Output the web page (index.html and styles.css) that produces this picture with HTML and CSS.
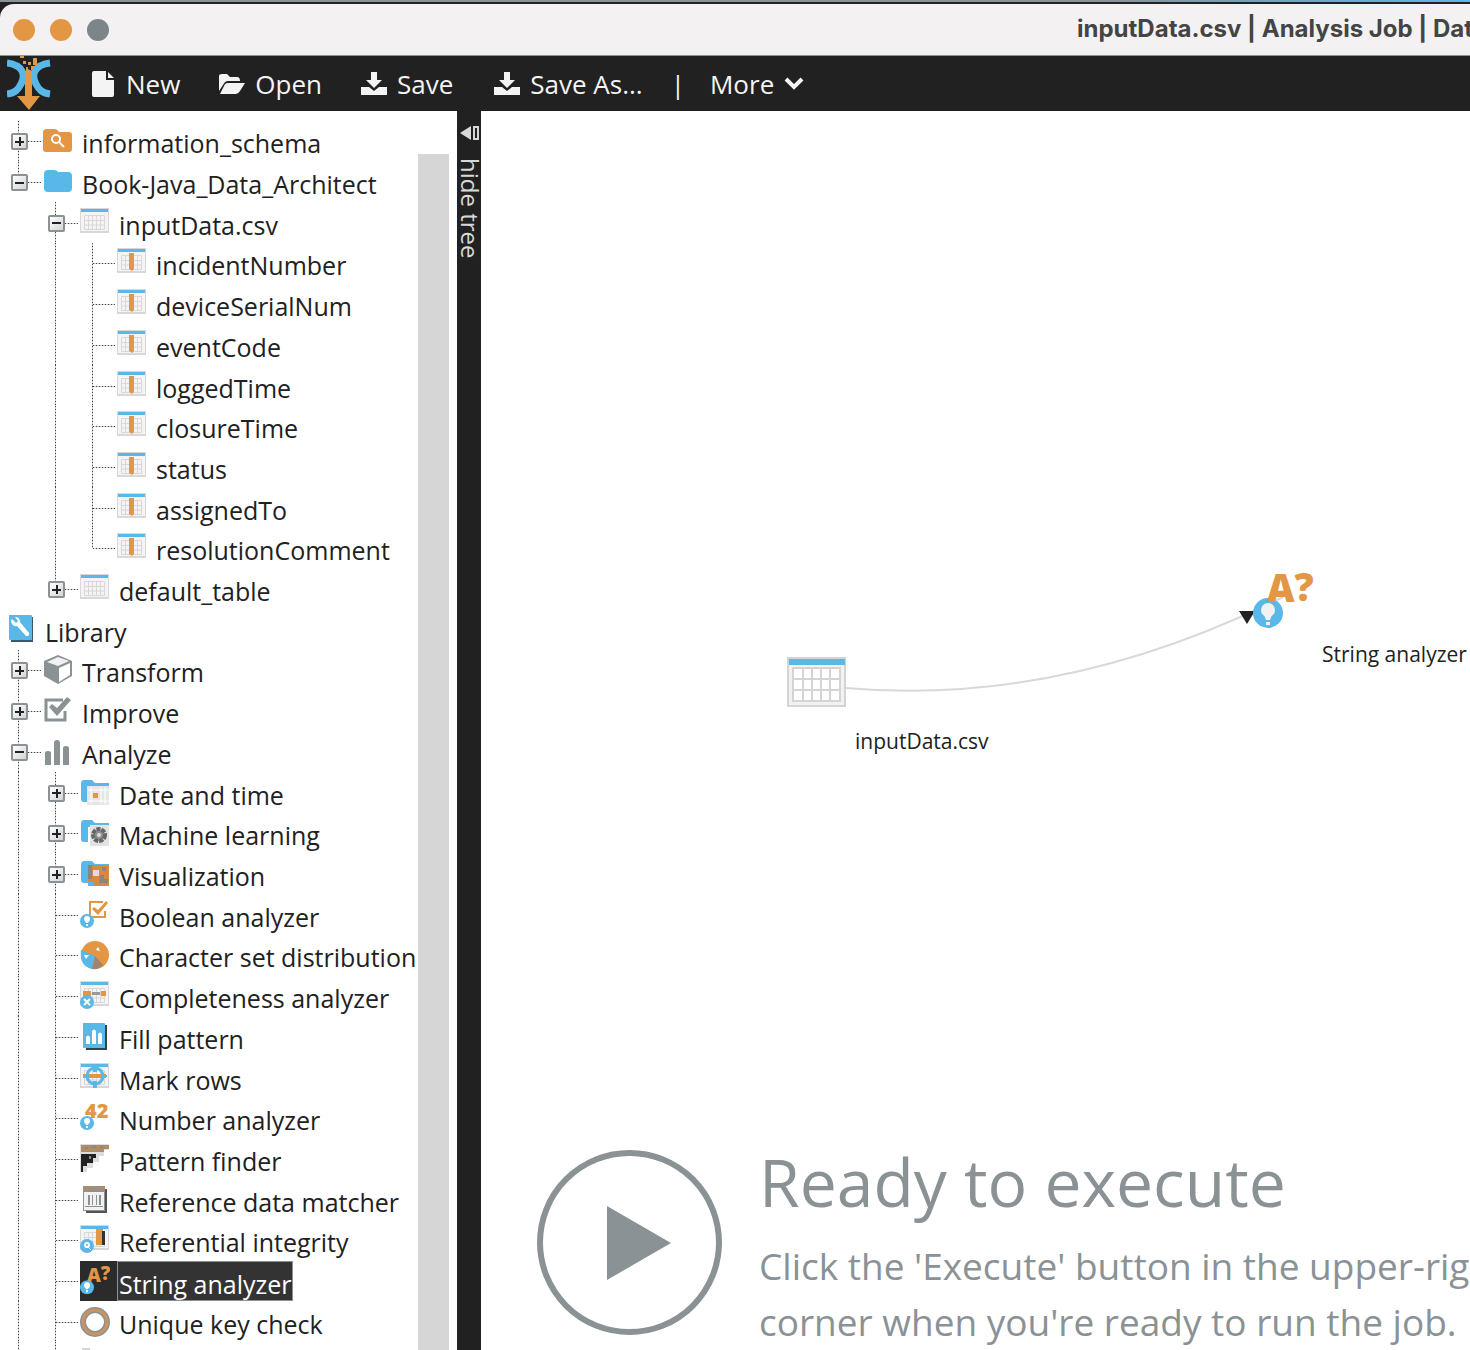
FILE: index.html
```html
<!DOCTYPE html>
<html lang="en">
<head>
<meta charset="utf-8">
<title>inputData.csv | Analysis Job</title>
<link rel="stylesheet" href="styles.css">
</head>
<body>
<svg class="sprite" aria-hidden="true">
  <symbol id="folder" viewBox="0 0 30 30"><path fill="#5ab8e8" d="M1 7Q1 3 5 3h6q3 0 4 2h10q4 0 4 4v12q0 4-4 4H5q-4 0-4-4z"/></symbol>
  <symbol id="folder-search" viewBox="0 0 30 30"><path fill="#e39643" d="M0 6Q0 3 4 3h8q2 0 4 3h10q3 0 3 3v14q0 3-3 3H3q-3 0-3-3z"/><circle cx="13" cy="13" r="4" fill="none" stroke="#fff" stroke-width="2"/><path d="m16 16 5 5" stroke="#fff" stroke-width="2"/></symbol>
  <symbol id="table" viewBox="0 0 30 30"><path fill="#d8d8d8" d="M0 0h29v25H0z"/><path fill="#f5f3f4" d="M1 4h27v19H1z"/><path fill="#5ab8e8" d="M1 1h27v3H1z"/><path fill="none" stroke="#d8d8d8" stroke-width="1" d="M4.500 7.500h20v14h-20zM4 12.500h21M4 17h21M8.500 7v15M12.500 7v15M16.500 7v15M20.500 7v15"/></symbol>
  <symbol id="column" viewBox="0 0 30 30"><use href="#table"/><path fill="#e39643" d="M12 5h5v16l-2 2-3-2z"/></symbol>
  <symbol id="library" viewBox="0 0 30 30"><path fill="#3a5a6c" d="M5 2h22v25H5z"/><path fill="#5ab8e8" d="M3 0h22q1 0 1 1v24H4q-1 0-1-1z"/><path fill="#fff" d="M5 6l1-2 4 4 2-2-3-4q5 0 5 5l9 11q1 2-1 3l-2 0L11 11Q6 12 5 6z"/></symbol>
  <symbol id="cube" viewBox="0 0 30 30"><path fill="#8a9296" d="M15 0l14 6v15l-14 8-14-8V6z"/><path fill="#f3f1f2" d="M15 2l11 4-11 5L4 7z"/><path fill="#fff" d="M16 13l11-5v12l-11 7z"/></symbol>
  <symbol id="improve" viewBox="0 0 30 30"><path fill="none" stroke="#8a9296" stroke-width="3" d="M20 4H3v20h19v-9"/><path fill="#8a9296" d="M6 11l3-3 5 4L24 1l4 3-14 16z"/></symbol>
  <symbol id="bars" viewBox="0 0 30 30"><path fill="#8a9296" d="M2 16q0-2 3-2t3 2v12H2zM11 6q0-3 3-3t3 3v22h-6zM20 11q0-2 3-2t3 2v17h-6z"/></symbol>
  <symbol id="folder-edge" viewBox="0 0 30 30"><path fill="#5ab8e8" d="M1 6Q1 2 4 2h8l3 3h14v4H8v15H4q-3 0-3-3z"/></symbol>
  <symbol id="date" viewBox="0 0 30 30"><use href="#folder-edge"/><path fill="#e6e6e6" d="M7 8h22v19H7z"/><path stroke="#fff" d="M8 12h21M8 23h21M11 9v17M21 9v17M25 9v17"/><path fill="#e39643" d="M13 15h5v5h-5z"/></symbol>
  <symbol id="machine" viewBox="0 0 30 30"><use href="#folder-edge"/><path fill="#e2e2e2" d="M10 7h19v21H10z"/><circle cx="19" cy="17" r="6" fill="#8a9296" stroke="#666" stroke-width="4" stroke-dasharray="4 1"/><circle cx="19" cy="17" r="2" fill="#ddd"/></symbol>
  <symbol id="visual" viewBox="0 0 30 30"><use href="#folder-edge"/><path fill="#d58a3e" d="M8 6h21v21H8z"/><path fill="#8a8580" d="M8 6h4v14H8zM20 16h4v4h4v4h-9zM22 8h4v4h-4z"/><path fill="#ddd" d="M13 11h6v6h-6z"/><path fill="#5ab8e8" d="M8 23h5v4H8z"/></symbol>
  <symbol id="bulb" viewBox="0 0 14 14"><circle cx="7" cy="7" r="7" fill="#5ab8e8"/><circle cx="7" cy="5" r="3" fill="#fff"/><path fill="#fff" d="M5 6h4L8 9H6zM6 10h2v2H6z"/></symbol>
  <symbol id="boolean" viewBox="0 0 30 30"><path fill="none" stroke="#e39643" stroke-width="2" d="M23 2H10v15h15v-6"/><path fill="#e39643" d="M12 9l2-2 4 3 8-9 2 2-10 12z"/><use href="#bulb" x="0" y="14" width="14" height="14"/></symbol>
  <symbol id="pie" viewBox="0 0 30 30"><circle cx="15" cy="15" r="14" fill="#e39643"/><path fill="#5ab8e8" d="M15 16L1 10q-2 16 11 19z"/><path fill="#a08470" d="M15 16l-3 13q7 1 11-4z"/><path fill="#fff" d="M4 15h5l-3 4zM16 10l2-3 2 4z"/></symbol>
  <symbol id="complete" viewBox="0 0 30 30"><use href="#table"/><path fill="#e39643" d="M3 10h8v5H3zM21 10h5v5h-5z"/><path fill="#999" d="M12 11h8v3h-8z"/><circle cx="7" cy="21" r="7" fill="#5ab8e8"/><path stroke="#fff" stroke-width="2" d="m4 18 6 6m0-6-6 6"/></symbol>
  <symbol id="fill" viewBox="0 0 30 30"><path fill="#33424c" d="M6 3h21v25H6z"/><path fill="#5ab8e8" d="M3 1h21q1 0 1 1v24H4q-1 0-1-1z"/><path fill="#fff" d="M6 15q2-3 4 0v7H6zM12 9q2-3 4 0v13h-4zM18 12q2-3 4 0v10h-4z"/></symbol>
  <symbol id="mark" viewBox="0 0 30 30"><use href="#table"/><path fill="#e39643" d="M3 11h23v4H3z"/><circle cx="15" cy="13" r="8" fill="none" stroke="#5ab8e8" stroke-width="3"/><path stroke="#5ab8e8" stroke-width="4" d="M15 2v7M15 18v7"/><path stroke="#5ab8e8" stroke-width="2" d="M3 13h6M21 13h6"/><path fill="#e39643" d="M10 11h10v4H10z"/></symbol>
  <symbol id="number" viewBox="0 0 30 30"><text class="glyph" x="5" y="15" font-size="20">42</text><use href="#bulb" x="0" y="13" width="14" height="14"/></symbol>
  <symbol id="pattern" viewBox="0 0 30 30"><path fill="#ddd" d="M0 0h29v6h-5v6h-5v6h-6v6H7v4H0z"/><path fill="#b08c64" d="M1 1h28v4h-5v3H1z"/><path fill="#212121" d="M1 10h15v4h-3v5H7v3H3v6H1z"/><path fill="#888" d="M5 3h3v2H5zM12 2h4v2h-4zM20 2h3v2h-3zM9 12h2v3H9z"/></symbol>
  <symbol id="reference" viewBox="0 0 30 30"><path fill="#555" d="M6 4h21v24H6z"/><path fill="#8a9296" d="M3 1h22v25H3z"/><path fill="#f3f1f2" d="M4 7h20v18H4z"/><path fill="#a98d72" d="M3 1h22v5h-4q-6-4-13 0H3z"/><path fill="#8a9296" d="M8 10h2v10H8zM12 10h1v10h-1zM16 10h1v10h-1zM19 10h2v10h-2zM5 21h18v1H5z"/></symbol>
  <symbol id="integrity" viewBox="0 0 30 30"><use href="#table"/><path fill="#e39643" d="M16 4h7v16h-7z"/><path fill="#333" d="M22 6h3v14h-3z"/><circle cx="7" cy="21" r="7" fill="#5ab8e8"/><circle cx="7" cy="20" r="2" fill="none" stroke="#fff" stroke-width="2"/><path stroke="#fff" d="m8 22 3 3"/></symbol>
  <symbol id="string" viewBox="0 0 30 30"><text class="glyph" x="7" y="16" font-size="19">A<tspan dy="-2">?</tspan></text><use href="#bulb" x="0" y="14" width="14" height="14"/></symbol>
  <symbol id="ring" viewBox="0 0 30 30"><circle cx="15" cy="15" r="12" fill="none" stroke="#8a9296" stroke-width="6"/><circle cx="15" cy="15" r="12" fill="none" stroke="#c99460" stroke-width="3"/></symbol>
  <symbol id="save" viewBox="0 0 26 24"><path fill="#f4f4f4" d="M10 0h6v8h5l-8 8-8-8h5zM0 15h8l5 4 5-4h8v8H0z"/></symbol>
</svg>

<div class="desktop-edge">
  <header class="titlebar">
    <div class="lights"><span class="light"></span><span class="light"></span><span class="light light-off"></span></div>
    <h1 class="window-title">inputData.csv | Analysis Job | DataCleaner</h1>
  </header>
</div>

<nav class="toolbar">
  <svg class="logo" viewBox="0 0 44 55" aria-hidden="true"><path fill="none" stroke="#5ab8e8" stroke-width="7" d="M0 7c16 2 19 12 14 21C11 34 8 37 0 38M43 7C27 9 24 19 29 28c3 6 6 9 14 10"/><path fill="#e39643" d="M18 15l3-2 4 2v25h8l-11 14-12-14h8zM13 0h4v2h-4zM16 5h3v3h-3zM26 2h4v7h-4zM21 6h3v3h-3zM24 10h3v4h-3zM19 11h2v3h-2z"/></svg>
  <button class="tool tool-new"><svg width="24" height="26" viewBox="0 0 24 26"><path fill="#f4f4f4" d="M1 2q0-2 2-2h12v9h8v15q0 2-2 2H3q-2 0-2-2zM17 1l6 6h-6z"/></svg>New</button>
  <button class="tool tool-open"><svg width="26" height="20" viewBox="0 0 26 20"><path fill="#f4f4f4" d="M0 2q0-2 3-2h5l3 3h7q3 0 3 4H9q-3 0-5 4l-4 6zM9 9h17l-5 8q-2 3-4 3H1l4-8q1-3 4-3z"/></svg>Open</button>
  <button class="tool tool-save"><svg width="26" height="24"><use href="#save"/></svg>Save</button>
  <button class="tool tool-save-as"><svg width="26" height="24"><use href="#save"/></svg>Save As...</button>
  <span class="divider">|</span>
  <button class="tool">More<svg width="20" height="14" viewBox="0 0 20 14"><path fill="none" stroke="#f4f4f4" stroke-width="4" d="m2 2 8 8 8-8"/></svg></button>
</nav>

<main class="workspace">
  <aside class="sidebar">
    <ul class="tree">
      <li class="row"><span class="guide through branch"><button class="toggle plus" aria-label="Expand"></button></span><svg class="icon"><use href="#folder-search"/></svg><span class="label">information_schema</span></li>
      <li class="row"><span class="guide end branch"><button class="toggle" aria-label="Collapse"></button></span><svg class="icon"><use href="#folder"/></svg><span class="label">Book-Java_Data_Architect</span></li>
      <li class="row"><span class="guide"></span><span class="guide through branch"><button class="toggle" aria-label="Collapse"></button></span><svg class="icon"><use href="#table"/></svg><span class="label">inputData.csv</span></li>
      <li class="row"><span class="guide"></span><span class="guide through"></span><span class="guide through branch"></span><svg class="icon"><use href="#column"/></svg><span class="label">incidentNumber</span></li>
      <li class="row"><span class="guide"></span><span class="guide through"></span><span class="guide through branch"></span><svg class="icon"><use href="#column"/></svg><span class="label">deviceSerialNum</span></li>
      <li class="row"><span class="guide"></span><span class="guide through"></span><span class="guide through branch"></span><svg class="icon"><use href="#column"/></svg><span class="label">eventCode</span></li>
      <li class="row"><span class="guide"></span><span class="guide through"></span><span class="guide through branch"></span><svg class="icon"><use href="#column"/></svg><span class="label">loggedTime</span></li>
      <li class="row"><span class="guide"></span><span class="guide through"></span><span class="guide through branch"></span><svg class="icon"><use href="#column"/></svg><span class="label">closureTime</span></li>
      <li class="row"><span class="guide"></span><span class="guide through"></span><span class="guide through branch"></span><svg class="icon"><use href="#column"/></svg><span class="label">status</span></li>
      <li class="row"><span class="guide"></span><span class="guide through"></span><span class="guide through branch"></span><svg class="icon"><use href="#column"/></svg><span class="label">assignedTo</span></li>
      <li class="row"><span class="guide"></span><span class="guide through"></span><span class="guide end branch"></span><svg class="icon"><use href="#column"/></svg><span class="label">resolutionComment</span></li>
      <li class="row"><span class="guide"></span><span class="guide end branch"><button class="toggle plus" aria-label="Expand"></button></span><svg class="icon"><use href="#table"/></svg><span class="label">default_table</span></li>
      <li class="row"><svg class="icon"><use href="#library"/></svg><span class="label">Library</span></li>
      <li class="row"><span class="guide through branch"><button class="toggle plus" aria-label="Expand"></button></span><svg class="icon"><use href="#cube"/></svg><span class="label">Transform</span></li>
      <li class="row"><span class="guide through branch"><button class="toggle plus" aria-label="Expand"></button></span><svg class="icon"><use href="#improve"/></svg><span class="label">Improve</span></li>
      <li class="row"><span class="guide through branch"><button class="toggle" aria-label="Collapse"></button></span><svg class="icon"><use href="#bars"/></svg><span class="label">Analyze</span></li>
      <li class="row"><span class="guide through"></span><span class="guide through branch"><button class="toggle plus" aria-label="Expand"></button></span><svg class="icon"><use href="#date"/></svg><span class="label">Date and time</span></li>
      <li class="row"><span class="guide through"></span><span class="guide through branch"><button class="toggle plus" aria-label="Expand"></button></span><svg class="icon"><use href="#machine"/></svg><span class="label">Machine learning</span></li>
      <li class="row"><span class="guide through"></span><span class="guide through branch"><button class="toggle plus" aria-label="Expand"></button></span><svg class="icon"><use href="#visual"/></svg><span class="label">Visualization</span></li>
      <li class="row"><span class="guide through"></span><span class="guide through branch"></span><svg class="icon"><use href="#boolean"/></svg><span class="label">Boolean analyzer</span></li>
      <li class="row"><span class="guide through"></span><span class="guide through branch"></span><svg class="icon"><use href="#pie"/></svg><span class="label">Character set distribution</span></li>
      <li class="row"><span class="guide through"></span><span class="guide through branch"></span><svg class="icon"><use href="#complete"/></svg><span class="label">Completeness analyzer</span></li>
      <li class="row"><span class="guide through"></span><span class="guide through branch"></span><svg class="icon"><use href="#fill"/></svg><span class="label">Fill pattern</span></li>
      <li class="row"><span class="guide through"></span><span class="guide through branch"></span><svg class="icon"><use href="#mark"/></svg><span class="label">Mark rows</span></li>
      <li class="row"><span class="guide through"></span><span class="guide through branch"></span><svg class="icon"><use href="#number"/></svg><span class="label">Number analyzer</span></li>
      <li class="row"><span class="guide through"></span><span class="guide through branch"></span><svg class="icon"><use href="#pattern"/></svg><span class="label">Pattern finder</span></li>
      <li class="row"><span class="guide through"></span><span class="guide through branch"></span><svg class="icon"><use href="#reference"/></svg><span class="label">Reference data matcher</span></li>
      <li class="row"><span class="guide through"></span><span class="guide through branch"></span><svg class="icon"><use href="#integrity"/></svg><span class="label">Referential integrity</span></li>
      <li class="row selected"><span class="guide through"></span><span class="guide through branch"></span><svg class="icon"><use href="#string"/></svg><span class="label">String analyzer</span></li>
      <li class="row"><span class="guide through"></span><span class="guide through branch"></span><svg class="icon"><use href="#ring"/></svg><span class="label">Unique key check</span></li>
      <li class="row row-cut"><span class="guide through"></span><span class="guide through"></span><span class="cut-icon"></span></li>
    </ul>
    <div class="scroll-thumb"></div>
  </aside>

  <button class="tree-handle"><svg width="20" height="14" viewBox="0 0 20 14"><path fill="#d8d8d8" d="M0 7l11-7v14z"/><path fill="none" stroke="#d8d8d8" stroke-width="2" d="M14 1h4v12h-4z"/></svg>hide tree</button>

  <section class="stage">
    <div class="canvas">
      <svg class="links" aria-hidden="true"><path fill="none" stroke="#d8d8d8" stroke-width="2" d="M364 577Q581 596 802 486"/><path fill="#212121" d="M758 500h16l-8 13z"/></svg>
      <svg class="node node-table" viewBox="0 0 60 51"><path fill="#f3f1f2" stroke="#d4d4d4" stroke-width="2" d="M1 1h57v48H1z"/><path fill="#5ab8e8" d="M2 2h56v6H2z"/><path fill="#fff" stroke="#d4d4d4" stroke-width="2" d="M6 11h47v33H6zM6 22h47M6 33h47M16 11v33M25 11v33M34 11v33M43 11v33"/></svg>
      <span class="node-label label-table">inputData.csv</span>
      <svg class="node node-string" viewBox="0 0 60 60"><circle cx="15" cy="44" r="15" fill="#5ab8e8"/><circle cx="15" cy="41" r="7" fill="#f3f1f2"/><path fill="#f3f1f2" d="M10 43h10l-3 8h-4zM13 53h4v3h-4z"/><text class="glyph" x="14" y="33" font-size="38">A<tspan dy="-1">?</tspan></text></svg>
      <span class="node-label label-string">String analyzer</span>
    </div>
    <div class="execute">
      <button class="play" aria-label="Execute"><svg width="64" height="74" viewBox="0 0 64 74"><path fill="#8a9296" d="M0 0l64 37L0 74z"/></svg></button>
      <div class="message">
        <h2 class="headline">Ready to execute</h2>
        <p class="hint">Click the 'Execute' button in the upper-right<br>corner when you're ready to run the job.</p>
      </div>
    </div>
  </section>
</main>
</body>
</html>
```
FILE: styles.css
```css
* { box-sizing: border-box; }

body {
  margin: 0;
  height: 100vh;
  display: flex;
  flex-direction: column;
  overflow: hidden;
  background: #fff;
  color: #212121;
  font-family: "Open Sans", "Noto Sans", sans-serif;
}

button {
  margin: 0;
  padding: 0;
  border: 0;
  background: none;
  color: inherit;
  font: inherit;
}

.sprite { display: none; }
.glyph { font-family: "Open Sans", sans-serif; font-weight: 800; fill: #e39643; }

/* Window chrome */
.desktop-edge {
  flex: none;
  padding-top: 4px;
  background:
    linear-gradient(transparent 0 2px, #212121 2px),
    linear-gradient(90deg, #8a9296 0 75%, #5ab8e8);
}
.titlebar {
  display: flex;
  align-items: center;
  height: 52px;
  padding-left: 13px;
  border-bottom: 1px solid #8a9296;
  border-top-left-radius: 14px;
  background: #f3f1f2;
}
.lights { display: flex; gap: 15px; }
.light { width: 22px; height: 22px; border-radius: 50%; background: #e39643; }
.light-off { background: #7d8589; }
.window-title {
  width: 393px;
  margin: 0 0 2px auto;
  overflow: hidden;
  white-space: nowrap;
  color: #444;
  font: 700 24px/32px Inter, sans-serif;
}

.toolbar {
  flex: none;
  display: flex;
  align-items: center;
  height: 55px;
  padding-left: 7px;
  background: #212121;
  color: #f4f4f4;
  font-size: 26px;
  line-height: 36px;
  white-space: nowrap;
}
.logo { width: 44px; height: 55px; margin-right: 40px; }
.tool { display: flex; align-items: center; gap: 10px; }
.tool-new { gap: 11px; }
.tool-new, .tool-open { margin-right: 39px; }
.tool-save { margin-right: 41px; }
.divider { margin: 0 25px 0 28px; }

.workspace { flex: 1; display: flex; min-height: 0; }

/* Tree */
.sidebar { flex: none; display: flex; width: 457px; }
.tree {
  flex: 1;
  display: flex;
  flex-direction: column;
  min-width: 0;
  margin: 0;
  padding: 10px 0 0;
  list-style: none;
  font-size: 25px;
  line-height: 32px;
  white-space: nowrap;
}
.row { flex: 1; display: flex; align-items: center; min-height: 34px; }
.row-cut { flex: none; align-items: flex-end; height: 8px; min-height: 0; }
.cut-icon { width: 8px; height: 2px; margin-left: 8px; background: #d4d4d4; }
.guide { position: relative; align-self: stretch; flex: none; width: 37px; }
.through::before,
.end::before {
  content: "";
  position: absolute;
  left: 18px;
  top: 0;
  bottom: 0;
  width: 1px;
  background: repeating-linear-gradient(#444 0 1px, #ccc 1px 3px);
}
.end::before { bottom: 50%; }
.branch::after {
  content: "";
  position: absolute;
  left: 19px;
  top: 50%;
  width: 22px;
  height: 1px;
  background: repeating-linear-gradient(90deg, #444 0 1px, #ccc 1px 3px);
}
.toggle {
  position: absolute;
  z-index: 1;
  left: 11px;
  top: 50%;
  width: 17px;
  height: 17px;
  margin-top: -8px;
  border: 2px solid #8a9296;
  border-radius: 2px;
  background:
    linear-gradient(#212121, #212121) center / 9px 2px no-repeat,
    linear-gradient(135deg, #fff, #d4d4d4);
}
.plus {
  background:
    linear-gradient(#212121, #212121) center / 9px 2px no-repeat,
    linear-gradient(#212121, #212121) center / 2px 9px no-repeat,
    linear-gradient(135deg, #fff, #d4d4d4);
}
.icon { flex: none; width: 30px; height: 30px; margin: 0 8px 0 6px; }
.label { padding: 4px 0 0 1px; }
.selected .icon {
  height: 100%;
  margin-right: 0;
  padding: 5px 7px 5px 0;
  width: 37px;
  background: #2b2b2b;
}
.selected .label {
  align-self: stretch;
  padding: 6px 1px 0;
  border: 1px solid #8a9296;
  background: #333;
  color: #fff;
}
.scroll-thumb { flex: none; width: 31px; margin: 43px 8px 0 0; background: #d6d6d6; }

.tree-handle {
  flex: none;
  display: flex;
  align-items: center;
  gap: 18px;
  width: 24px;
  padding: 15px 0 0 2px;
  background: #212121;
  color: #d8d8d8;
  font-size: 24px;
  line-height: 22px;
  writing-mode: vertical-rl;
}

/* Job canvas */
.stage { flex: 1; display: flex; flex-direction: column; min-width: 0; overflow: hidden; }
.canvas { flex: 1; position: relative; }
.links { position: absolute; left: 0; top: 0; width: 100%; height: 100%; }
.node { position: absolute; overflow: visible; }
.node-table { left: 306px; top: 546px; width: 60px; height: 51px; }
.node-string { left: 772px; top: 458px; width: 60px; height: 60px; }
.node-label { position: absolute; font-size: 21px; line-height: 28px; white-space: nowrap; }
.label-table { left: 374px; top: 616px; }
.label-string { left: 841px; top: 529px; }

.execute {
  flex: none;
  display: flex;
  align-items: flex-end;
  gap: 37px;
  padding-left: 56px;
  color: #8a9296;
  white-space: nowrap;
}
.play {
  flex: none;
  display: flex;
  align-items: center;
  justify-content: center;
  width: 185px;
  height: 185px;
  margin-bottom: 15px;
  padding-left: 18px;
  border: 6px solid #8a9296;
  border-radius: 50%;
}
.headline { margin: 0 0 17px; font-size: 66px; line-height: 80px; font-weight: 400; }
.hint { margin: 0; font-size: 37px; line-height: 56px; }
```
